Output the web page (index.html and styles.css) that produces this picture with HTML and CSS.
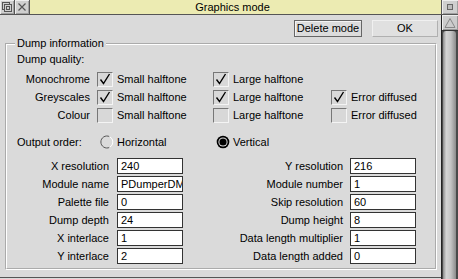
FILE: index.html
```html
<!DOCTYPE html>
<html>
<head>
<meta charset="utf-8">
<title>Graphics mode</title>
<link rel="stylesheet" href="styles.css">
</head>
<body>
<div class="window">
  <div class="titlebar">
    <div class="ticon"><svg width="14" height="14" viewBox="0 0 14 14"><rect x="2.5" y="2.5" width="7" height="7" fill="none" stroke="#555"/><rect x="4.5" y="4.5" width="7" height="7" fill="#cfcfcf" stroke="#555"/><rect x="6.5" y="6.5" width="3" height="3" fill="none" stroke="#555"/></svg></div>
    <div class="ticon"><svg width="14" height="14" viewBox="0 0 14 14"><path d="M3.5 3.5 L10.5 10.5 M10.5 3.5 L3.5 10.5" stroke="#555" stroke-width="1.2"/></svg></div>
    <div class="title">Graphics mode</div>
    <div class="ticon toggle"><svg width="14" height="14" viewBox="0 0 14 14"><rect x="4.5" y="4.5" width="5" height="5" fill="#bbb" stroke="#666"/></svg></div>
  </div>
  <div class="main">
    <div class="content">
      <div class="actions">
        <div class="btn">Delete mode</div>
        <div class="btn default">OK</div>
      </div>
      <fieldset class="group">
        <legend>Dump information</legend>
        <div class="sub">Dump quality:</div>
        <div class="quality">
          <span class="qlabel">Monochrome</span>
          <span class="opt"><span class="check"><svg width="14" height="14" viewBox="0 0 14 14"><path d="M2.5 7.5 L5.5 11.5 L11.5 2" fill="none" stroke="#000" stroke-width="1.4"/></svg></span>Small halftone</span>
          <span class="opt"><span class="check"><svg width="14" height="14" viewBox="0 0 14 14"><path d="M2.5 7.5 L5.5 11.5 L11.5 2" fill="none" stroke="#000" stroke-width="1.4"/></svg></span>Large halftone</span>
          <span></span>

          <span class="qlabel">Greyscales</span>
          <span class="opt"><span class="check"><svg width="14" height="14" viewBox="0 0 14 14"><path d="M2.5 7.5 L5.5 11.5 L11.5 2" fill="none" stroke="#000" stroke-width="1.4"/></svg></span>Small halftone</span>
          <span class="opt"><span class="check"><svg width="14" height="14" viewBox="0 0 14 14"><path d="M2.5 7.5 L5.5 11.5 L11.5 2" fill="none" stroke="#000" stroke-width="1.4"/></svg></span>Large halftone</span>
          <span class="opt"><span class="check"><svg width="14" height="14" viewBox="0 0 14 14"><path d="M2.5 7.5 L5.5 11.5 L11.5 2" fill="none" stroke="#000" stroke-width="1.4"/></svg></span>Error diffused</span>

          <span class="qlabel">Colour</span>
          <span class="opt"><span class="check"></span>Small halftone</span>
          <span class="opt"><span class="check"></span>Large halftone</span>
          <span class="opt"><span class="check"></span>Error diffused</span>
        </div>
        <div class="order">
          <span class="olabel">Output order:</span>
          <span class="ropt"><span class="radio"><svg width="14" height="14" viewBox="0 0 14 14"><path d="M9.5 1.6 A6 6 0 1 0 9.5 12.4" fill="none" stroke="#555" stroke-width="1"/><path d="M9.5 1.6 A6 6 0 0 1 9.5 12.4" fill="none" stroke="#fff" stroke-width="1"/></svg></span>Horizontal</span>
          <span class="ropt"><span class="radio"><svg width="14" height="14" viewBox="0 0 14 14"><circle cx="7" cy="7" r="6.3" fill="#000"/><circle cx="7" cy="7" r="4.6" fill="#ddd"/><circle cx="7" cy="7" r="3.6" fill="#000"/></svg></span>Vertical</span>
        </div>
        <div class="fields">
          <span class="flabel">X resolution</span><span class="input">240</span>
          <span class="flabel">Y resolution</span><span class="input">216</span>
          <span class="flabel">Module name</span><span class="input">PDumperDM</span>
          <span class="flabel">Module number</span><span class="input">1</span>
          <span class="flabel">Palette file</span><span class="input">0</span>
          <span class="flabel">Skip resolution</span><span class="input">60</span>
          <span class="flabel">Dump depth</span><span class="input">24</span>
          <span class="flabel">Dump height</span><span class="input">8</span>
          <span class="flabel">X interlace</span><span class="input">1</span>
          <span class="flabel">Data length multiplier</span><span class="input">1</span>
          <span class="flabel">Y interlace</span><span class="input">2</span>
          <span class="flabel">Data length added</span><span class="input">0</span>
        </div>
      </fieldset>
    </div>
    <div class="vscroll">
      <div class="up"><svg width="14" height="14" viewBox="0 0 14 14"><path d="M7 2.5 L12 11.5 L2 11.5 Z" fill="none" stroke="#888" stroke-width="1"/></svg></div>
      <div class="well"><div class="thumb"></div></div>
    </div>
  </div>
</div>
</body>
</html>
```
FILE: styles.css
```css
* { box-sizing: border-box; }
html, body { margin: 0; padding: 0; }
body {
  width: 458px;
  height: 279px;
  overflow: hidden;
  font-family: "Liberation Sans", Arial, sans-serif;
  font-size: 11px;
  color: #000;
  background: #dadada;
}
.window {
  display: flex;
  flex-direction: column;
  width: 458px;
  height: 279px;
}
.titlebar {
  display: flex;
  flex: none;
  height: 15px;
  border-bottom: 1px solid #555;
}
.ticon {
  width: 15px;
  height: 14px;
  flex: none;
  display: flex;
  align-items: center;
  justify-content: center;
  background: #cfcfcf;
  border-right: 1px solid #555;
  box-shadow: inset 1px 1px #eee, inset -1px -1px #a0a0a0;
}
.ticon.toggle { border-right: none; width: 16px; }
.title {
  flex: 1;
  background: #ecebb2;
  text-align: center;
  line-height: 14px;
  border-right: 1px solid #555;
  padding-right: 6px;
}
.main {
  flex: 1;
  display: flex;
  min-height: 0;
}
.content {
  flex: 1;
  padding: 5px 3px 0 5px;
  border-bottom: 1px solid #555;
  margin-bottom: 1px;
}
.actions {
  display: flex;
  justify-content: flex-end;
  gap: 10px;
  height: 17px;
  padding-right: 0;
}
.btn {
  width: 68px;
  height: 17px;
  line-height: 15px;
  text-align: center;
  background: #dcdcdc;
  border: 1px solid #666;
  box-shadow: inset 1px 1px #f4f4f4;
}
.btn.default {
  width: 66px;
  border-color: #f0f0f0 #b0b0b0 #b0b0b0 #f0f0f0;
  background: #e0e0e0;
  box-shadow: none;
}
.group {
  margin: 0 1px 0 0;
  padding: 3px 4px 4px 10px;
  border: 2px groove #fff;
  min-width: 0;
}
.group legend {
  padding: 0 2px;
  margin-left: -2px;
  line-height: 13px;
}
.sub { line-height: 13px; }
.quality {
  display: grid;
  grid-template-columns: 80px 116px 118px 1fr;
  grid-auto-rows: 16px;
  row-gap: 2px;
  margin-top: 5px;
}
.qlabel {
  text-align: right;
  padding-right: 7px;
  line-height: 16px;
}
.opt {
  display: flex;
  align-items: center;
  gap: 4px;
  white-space: nowrap;
}
.check {
  width: 16px;
  height: 15px;
  flex: none;
  display: flex;
  align-items: center;
  justify-content: center;
  background: #d8d8d8;
  border: 1px solid;
  border-color: #777 #f4f4f4 #f4f4f4 #777;
}
.order {
  display: grid;
  grid-template-columns: 80px 116px 118px;
  height: 16px;
  margin-top: 11px;
}
.olabel { line-height: 16px; }
.ropt {
  display: flex;
  align-items: center;
  gap: 3px;
  padding-left: 3px;
}
.radio {
  width: 14px;
  height: 14px;
  flex: none;
  display: flex;
}
.fields {
  display: grid;
  grid-template-columns: 100px 66px 167px 66px;
  grid-auto-rows: 16px;
  row-gap: 2px;
  margin-top: 8px;
}
.flabel {
  text-align: right;
  padding-right: 8px;
  line-height: 16px;
  white-space: nowrap;
}
.fields .flabel:nth-child(4n+3) { padding-right: 7px; }
.input {
  background: #fff;
  border: 1px solid #333;
  padding-left: 3px;
  line-height: 14px;
  overflow: hidden;
  white-space: nowrap;
}
.vscroll {
  width: 17px;
  flex: none;
  display: flex;
  flex-direction: column;
  border-left: 1px solid #222;
  background: #4a4a4a;
}
.up {
  height: 16px;
  flex: none;
  display: flex;
  align-items: center;
  justify-content: center;
  background: #cccccc;
  border-bottom: 1px solid #333;
  box-shadow: inset 1px 1px #eee, inset -1px -1px #999;
}
.well {
  flex: 1;
  padding: 0 2px 0 1px;
}
.thumb {
  height: 100%;
  border-radius: 3px 3px 0 0;
  background: linear-gradient(to right, #8a8a8a, #d4d4d4 25%, #c4c4c4 60%, #8c8c8c);
}
```
